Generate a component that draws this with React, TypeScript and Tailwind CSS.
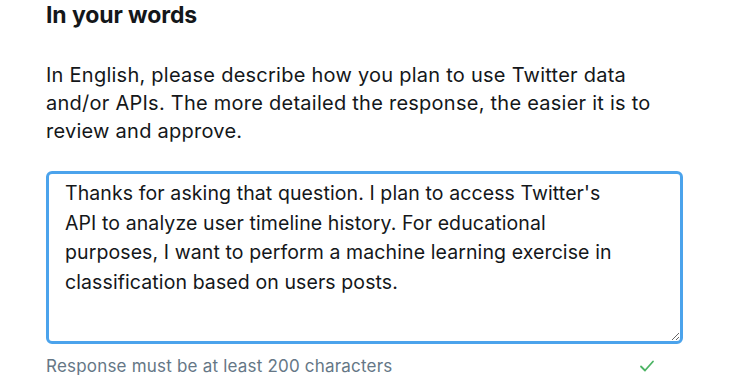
import React from "react";

export default function App() {
  const text =
    "Thanks for asking that question. I plan to access Twitter's API to analyze user timeline history. For educational purposes, I want to perform a machine learning exercise in classification based on users posts.";
  return (
    <div
      className="w-[750px] h-[375px] overflow-hidden bg-white text-[#14171a]"
      style={{ fontFamily: "Inter, 'Liberation Sans', sans-serif" }}
    >
      <div className="pl-[46px] pt-[1px] w-[690px]">
        <h2 className="text-[23px] font-bold leading-[28px] tracking-[-0.1px]">In your words</h2>
        <p className="mt-[32px] text-[20px] leading-[28px] tracking-[0.25px] pr-[20px]">
          In English, please describe how you plan to use Twitter data and/or APIs. The more detailed the
          response, the easier it is to review and approve.
        </p>
        <textarea
          className="mt-[26px] block w-[637px] h-[173px] border-[3px] border-[#4ba3ec] rounded-[6px] pl-[16px] pr-[50px] py-[5px] text-[19.5px] leading-[29.5px] tracking-[0.1px] outline-none resize-y text-[#14171a]"
          style={{ fontFamily: "Inter, 'Liberation Sans', sans-serif" }}
          defaultValue={text}
        />
        <div className="mt-[12px] w-[637px] flex items-center justify-between pr-[28px]">
          <span className="text-[17px] leading-[20px] tracking-[0.2px] text-[#657786]">Response must be at least 200 characters</span>
          <svg width="16" height="14" viewBox="0 0 16 14" fill="none">
            <path d="M2 7.5 L6 11.5 L14 2.5" stroke="#4cb464" strokeWidth="1.8" strokeLinecap="round" strokeLinejoin="round" />
          </svg>
        </div>
      </div>
    </div>
  );
}
